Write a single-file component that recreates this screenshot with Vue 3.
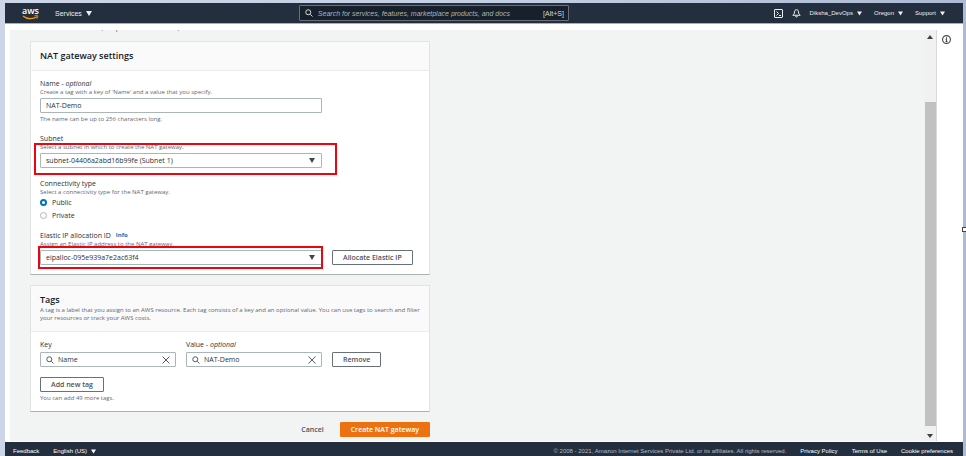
<script setup>
import { ref } from 'vue';

const name = ref('NAT-Demo');
const subnet = ref('subnet-04406a2abd16b99fe (Subnet 1)');
const elasticIp = ref('eipalloc-095e939a7e2ac63f4');
const connectivity = ref('public');
const tagKey = ref('Name');
const tagValue = ref('NAT-Demo');

const connectivityTypes = [
  { value: 'public', label: 'Public' },
  { value: 'private', label: 'Private' }
];

const accountMenus = ['Diksha_DevOps', 'Oregon', 'Support'];
const legalLinks = ['Privacy Policy', 'Terms of Use', 'Cookie preferences'];
</script>

<template>
  <div class="desktop">
    <div class="frame">
      <header class="top-bar">
        <a href="#" class="logo" aria-label="AWS">
          <span class="logo-text">aws</span>
          <svg class="smile" viewBox="0 0 17 5" aria-hidden="true">
            <path d="M1 1c4 3.4 10 3.4 14 .8" fill="none" stroke="#f90" stroke-width="1.2" />
            <path d="M12.5.7c1.5-.4 2.8-.4 3.2 0s0 1.7-.9 2.9" fill="none" stroke="#f90" stroke-width="1" />
          </svg>
        </a>
        <button type="button" class="menu services">
          Services
          <svg class="caret" viewBox="0 0 6 5" aria-hidden="true"><path d="M0 0h6L3 5z" /></svg>
        </button>
        <label class="search">
          <svg class="icon" viewBox="0 0 16 16" aria-hidden="true">
            <circle cx="6.5" cy="6.5" r="5" />
            <path d="M10.5 10.5 15 15" />
          </svg>
          <input type="search" aria-label="Search" placeholder="Search for services, features, marketplace products, and docs" />
          <span>[Alt+S]</span>
        </label>
        <nav class="account">
          <button type="button" class="menu" aria-label="CloudShell">
            <svg class="shell" viewBox="0 0 18 18" aria-hidden="true">
              <rect x="1" y="1" width="16" height="16" rx="1" />
              <path d="M5 5l4 4-4 4M10 13h4" />
            </svg>
          </button>
          <button type="button" class="menu bell-button" aria-label="Notifications">
            <svg class="bell" viewBox="0 0 18 18" aria-hidden="true">
              <path d="M9 1.5C6.200 1.500 5 3.500 5 6c0 3-1 4.500-3.500 6.500h15C14 10.500 13 9 13 6c0-2.500-1.200-4.500-4-4.500zM7 13.500c0 3.400 4 3.400 4 0" />
            </svg>
          </button>
          <button v-for="item in accountMenus" :key="item" type="button" class="menu small">
            {{ item }}
            <svg class="caret" viewBox="0 0 6 5" aria-hidden="true"><path d="M0 0h6L3 5z" /></svg>
          </button>
        </nav>
      </header>

      <div class="workspace">
        <main class="page">
          <div class="content">
            <p class="intro">services in other VPCs, on-premises networks, or the internet.</p>

            <section class="card">
              <div class="card-head">
                <h2>NAT gateway settings</h2>
              </div>
              <div class="card-body">
                <div class="field">
                  <label for="name">Name - <em>optional</em></label>
                  <p class="hint">Create a tag with a key of 'Name' and a value that you specify.</p>
                  <input id="name" v-model="name" class="control" type="text" />
                  <p class="hint below">The name can be up to 256 characters long.</p>
                </div>

                <div class="field">
                  <label for="subnet">Subnet</label>
                  <p class="hint">Select a subnet in which to create the NAT gateway.</p>
                  <div class="select">
                    <select id="subnet" v-model="subnet" class="control">
                      <option>subnet-04406a2abd16b99fe (Subnet 1)</option>
                    </select>
                    <svg class="caret" viewBox="0 0 6 5" aria-hidden="true"><path d="M0 0h6L3 5z" /></svg>
                    <span class="marker wide"></span>
                  </div>
                </div>

                <fieldset class="field">
                  <legend>Connectivity type</legend>
                  <p class="hint">Select a connectivity type for the NAT gateway.</p>
                  <div class="radios">
                    <label v-for="type in connectivityTypes" :key="type.value">
                      <input v-model="connectivity" type="radio" name="connectivity" :value="type.value" />
                      {{ type.label }}
                    </label>
                  </div>
                </fieldset>

                <div class="field">
                  <div class="label-row">
                    <label for="eip">Elastic IP allocation ID</label>
                    <a href="#" class="info">Info</a>
                  </div>
                  <p class="hint">Assign an Elastic IP address to the NAT gateway.</p>
                  <div class="row">
                    <div class="select">
                      <select id="eip" v-model="elasticIp" class="control">
                        <option>eipalloc-095e939a7e2ac63f4</option>
                      </select>
                      <svg class="caret" viewBox="0 0 6 5" aria-hidden="true"><path d="M0 0h6L3 5z" /></svg>
                      <span class="marker"></span>
                    </div>
                    <button type="button" class="button">Allocate Elastic IP</button>
                  </div>
                </div>
              </div>
            </section>

            <section class="card">
              <div class="card-head">
                <h2>Tags</h2>
                <p class="hint">
                  A tag is a label that you assign to an AWS resource. Each tag consists of a key and an optional value.
                  You can use tags to search and filter your resources or track your AWS costs.
                </p>
              </div>
              <div class="card-body">
                <div class="row tag-row">
                  <div class="tag-field">
                    <label for="tag-key">Key</label>
                    <div class="control search-box">
                      <svg class="icon" viewBox="0 0 16 16" aria-hidden="true">
                        <circle cx="6.5" cy="6.5" r="5" />
                        <path d="M10.5 10.5 15 15" />
                      </svg>
                      <input id="tag-key" v-model="tagKey" type="text" />
                      <button type="button" aria-label="Clear key" @click="tagKey = ''">
                        <svg class="icon" viewBox="0 0 16 16" aria-hidden="true"><path d="M1 1l14 14M15 1 1 15" /></svg>
                      </button>
                    </div>
                  </div>
                  <div class="tag-field">
                    <label for="tag-value">Value - <em>optional</em></label>
                    <div class="control search-box">
                      <svg class="icon" viewBox="0 0 16 16" aria-hidden="true">
                        <circle cx="6.5" cy="6.5" r="5" />
                        <path d="M10.5 10.5 15 15" />
                      </svg>
                      <input id="tag-value" v-model="tagValue" type="text" />
                      <button type="button" aria-label="Clear value" @click="tagValue = ''">
                        <svg class="icon" viewBox="0 0 16 16" aria-hidden="true"><path d="M1 1l14 14M15 1 1 15" /></svg>
                      </button>
                    </div>
                  </div>
                  <button type="button" class="button">Remove</button>
                </div>
                <button type="button" class="button">Add new tag</button>
                <p class="hint below">You can add 49 more tags.</p>
              </div>
            </section>

            <div class="actions">
              <button type="button" class="button link">Cancel</button>
              <button type="button" class="button primary">Create NAT gateway</button>
            </div>
          </div>

          <div class="scrollbar" aria-hidden="true">
            <svg viewBox="0 0 6 4"><path d="M0 4h6L3 0z" /></svg>
            <div class="track"><div class="thumb"></div></div>
            <svg viewBox="0 0 6 4"><path d="M0 0h6L3 4z" /></svg>
          </div>
        </main>

        <aside class="help">
          <button type="button" aria-label="Open help panel">
            <svg viewBox="0 0 16 16" aria-hidden="true">
              <circle cx="8" cy="8" r="7" />
              <path d="M8 4v2M6.5 7.5H8V12M6 12h4" />
            </svg>
          </button>
        </aside>
      </div>

      <footer class="bottom-bar">
        <a href="#">Feedback</a>
        <button type="button" class="menu small">
          English (US)
          <svg class="caret" viewBox="0 0 6 5" aria-hidden="true"><path d="M0 0h6L3 5z" /></svg>
        </button>
        <span class="copyright">© 2008 - 2021, Amazon Internet Services Private Ltd. or its affiliates. All rights reserved.</span>
        <a v-for="link in legalLinks" :key="link" href="#">{{ link }}</a>
      </footer>
    </div>
    <span class="handle"></span>
  </div>
</template>

<style>
body {
  margin: 0;
}
</style>

<style scoped>
* {
  box-sizing: border-box;
}

.desktop {
  position: relative;
  height: 100vh;
  padding: 3px 3px 0 5px;
  background: linear-gradient(90deg, #ccd6e8, #c5cfe4 50%, #acbad3);
  overflow: hidden;
}

.frame {
  display: flex;
  flex-direction: column;
  height: 100%;
  background: #fff;
  color: #545b64;
  font-family: "Open Sans", "Noto Sans", sans-serif;
  font-size: 7px;
  line-height: 9px;
}

h2,
p {
  margin: 0;
}

button,
input,
select {
  margin: 0;
  padding: 0;
  border: none;
  background: none;
  color: inherit;
  font: inherit;
}

.caret {
  flex: none;
  width: 6px;
  height: 5px;
  fill: currentColor;
}

.icon {
  flex: none;
  width: 8px;
  height: 8px;
  fill: none;
  stroke: currentColor;
  stroke-width: 2;
}

.top-bar {
  display: flex;
  flex: none;
  align-items: center;
  height: 21px;
  padding: 0 18px 0 17px;
  border-bottom: 1px solid #a9afbb;
  background: #232f3e;
  color: #eee;
  font-family: "Liberation Sans", Arial, sans-serif;
}

.logo {
  display: flex;
  flex-direction: column;
  width: 17px;
  color: #fff;
  text-decoration: none;
}

.logo-text {
  font-family: "Open Sans", sans-serif;
  font-size: 9px;
  font-weight: 600;
  line-height: 8px;
}

.smile {
  width: 17px;
  height: 5px;
}

.menu {
  display: flex;
  align-items: center;
  gap: 4px;
}

.services {
  margin-left: 16px;
}

.small {
  font-size: 6px;
}

.small .caret {
  width: 5px;
}

.search {
  display: flex;
  flex: 0 1 270px;
  align-items: center;
  gap: 5px;
  height: 16px;
  margin-left: 207px;
  padding: 0 4px 0 5px;
  border: 1px solid #687078;
  border-radius: 1px;
  background: #17202b;
  color: #d5dbdb;
}

.search input {
  flex: 1;
  min-width: 0;
  outline: none;
}

.search input::placeholder {
  color: #aab7b8;
  font-style: italic;
  opacity: 1;
}

.account {
  display: flex;
  align-items: center;
  gap: 12px;
  margin-left: auto;
}

.bell-button {
  margin-left: -3px;
  margin-right: -3px;
}

.shell,
.bell {
  width: 9px;
  height: 9px;
  fill: none;
  stroke: currentColor;
  stroke-width: 2;
}

.workspace {
  display: flex;
  flex: 1;
  min-height: 0;
  padding: 6px 0 1px 5px;
}

.page {
  display: flex;
  flex: 1;
  justify-content: space-between;
  background: #f2f3f3;
  border-right: 1px solid #d5dbdb;
}

.content {
  width: 400px;
  margin-left: 20px;
}

.intro {
  display: flex;
  align-items: flex-end;
  height: 2px;
  margin-bottom: 9px;
  overflow: hidden;
}

.card {
  margin-bottom: 10px;
  border: 1px solid #e0e4e4;
  border-bottom-color: #aab3b3;
  background: #fff;
}

.card-head {
  padding: 7px 9px 8px;
  border-bottom: 1px solid #eaeded;
  background: #fafafa;
}

.card-head .hint {
  margin-bottom: 1px;
}

h2 {
  color: #16191f;
  font-size: 9px;
  font-weight: 600;
  line-height: 13px;
}

.card-body {
  padding: 8px 9px 9px;
}

.field {
  min-width: 0;
  margin: 0 0 11px;
  padding: 0;
  border: none;
}

.field:last-child {
  margin-bottom: 0;
}

.field label,
.field legend,
.tag-field label {
  display: block;
  padding: 0;
  color: #2b3037;
}

.hint {
  color: #5f676f;
  font-size: 6px;
  line-height: 8px;
}

.below {
  margin-top: 2px;
}

.control {
  display: block;
  width: 282px;
  height: 15px;
  padding: 0 5px;
  border: 1px solid #aab7b8;
  border-radius: 1px;
  background: #fff;
  color: #2b3037;
}

.hint + .control,
.hint + .select,
.hint + .radios,
.hint + .row {
  margin-top: 2px;
}

.select {
  position: relative;
  width: 282px;
}

.select select {
  appearance: none;
}

.select .caret {
  position: absolute;
  top: 5px;
  right: 7px;
  color: #414750;
  pointer-events: none;
}

.marker {
  position: absolute;
  inset: -4px -1px -4px -2px;
  border: 2px solid #ee0410;
  pointer-events: none;
}

.marker.wide {
  inset: -10px -15px -7px -6px;
}

.radios {
  display: grid;
  gap: 4px;
}

.radios label {
  display: flex;
  align-items: center;
  gap: 5px;
}

.radios input {
  appearance: none;
  width: 7px;
  height: 7px;
  border: 1px solid #aab7b8;
  border-radius: 50%;
}

.radios input:checked {
  border: 2px solid #0073bb;
}

.label-row {
  display: flex;
  gap: 5px;
}

.info {
  color: #0073bb;
  font-size: 6px;
  font-weight: 700;
  text-decoration: none;
}

.row {
  display: flex;
  gap: 10px;
}

.button {
  height: 15px;
  padding: 0 10px;
  border: 1px solid #687078;
  border-radius: 1px;
  background: #fff;
  color: #4b525b;
  font-weight: 600;
  line-height: 13px;
  white-space: nowrap;
}

.tag-row {
  align-items: flex-end;
  margin-bottom: 10px;
}

.tag-field .control {
  display: flex;
  align-items: center;
  gap: 4px;
  width: 136px;
  margin-top: 3px;
}

.search-box input {
  flex: 1;
  min-width: 0;
}

.search-box button {
  display: flex;
}

.search-box .icon {
  color: #545b64;
}

.actions {
  display: flex;
  justify-content: flex-end;
  gap: 5px;
}

.link {
  border-color: transparent;
  background: none;
}

.primary {
  border-color: #ec7211;
  background: #ec7211;
  color: #fff;
}

.scrollbar {
  display: flex;
  flex-direction: column;
  align-items: center;
  width: 12px;
  padding: 5px 0 3px;
  background: #f1f1f1;
}

.scrollbar svg {
  width: 6px;
  height: 4px;
  fill: #414141;
}

.track {
  display: flex;
  flex: 1;
  justify-content: flex-end;
  width: 100%;
  padding: 63px 0 8px;
}

.thumb {
  width: 11px;
  background: #c1c1c1;
}

.help {
  width: 26px;
  padding: 5px 5px 0;
}

.help svg {
  display: block;
  width: 9px;
  height: 9px;
  fill: none;
  stroke: #414750;
  stroke-width: 2;
}

.bottom-bar {
  display: flex;
  flex: none;
  align-items: center;
  gap: 14px;
  height: 14px;
  padding: 4px 10px 0 8px;
  background: #232f3e;
  color: #fff;
  font-family: "Liberation Sans", Arial, sans-serif;
  font-size: 6px;
}

.bottom-bar a {
  color: inherit;
  text-decoration: none;
}

.copyright {
  margin-left: auto;
  color: #b5bcc4;
}

.handle {
  position: absolute;
  top: 227px;
  right: 0;
  width: 4px;
  height: 5px;
  border: 1px solid #444;
  border-right: none;
  background: #fff;
}
</style>
